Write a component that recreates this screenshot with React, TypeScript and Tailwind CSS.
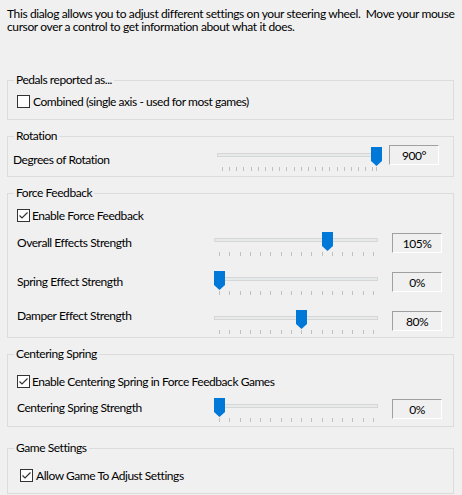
import React from 'react';

const FF_TICKS = Array.from({ length: 16 }, (_, i) => i / 15);
const ROT_TICKS = [...Array.from({ length: 22 }, (_, i) => i / 21.5), 1];

// Trackbar: track, tick row and the blue thumb
const Slider = ({ pos, ticks }: { pos: number; ticks: number[] }) => {
  const span = 154;
  return (
    <div className="relative h-[24px] w-[164px] shrink-0 pt-[6px]">
      <div className="h-[4px] border border-[#d6d6d6] bg-[#e7eaea]" />
      <svg className="mt-[10px] block" width={164} height={4}>
        {ticks.map((t, i) => (
          <rect key={i} x={5 + Math.round(t * span)} y={0} width={1} height={4} fill="#c0c0c0" />
        ))}
      </svg>
      <svg className="absolute top-0" style={{ left: Math.round(pos * span) }} width={11} height={19}>
        <path d="M0 0H11V14L5.5 19L0 14Z" fill="#0078d7" />
      </svg>
    </div>
  );
};

const ValueBox = ({ value, className }: { value: string; className: string }) => (
  <div
    className={
      'flex h-[20px] w-[50px] shrink-0 items-center justify-center border border-t-[#a0a0a0] border-l-[#a0a0a0] border-b-white border-r-white leading-[15px] ' +
      className
    }
  >
    {value}
  </div>
);

const Checkbox = ({ checked }: { checked: boolean }) => (
  <div className="h-[13px] w-[13px] shrink-0 border border-[#333333] bg-white">
    {checked && (
      <svg width={11} height={11} className="block">
        <path d="M1.5 5.5L4 8L9.5 2.5" stroke="#333333" strokeWidth={1.2} fill="none" />
      </svg>
    )}
  </div>
);

const Group = ({ title, className, children }: { title: string; className: string; children: React.ReactNode }) => (
  <fieldset className={'border border-[#dcdcdc] ' + className}>
    <legend className="ml-[6px] px-[2px] leading-[14px]">{title}</legend>
    {children}
  </fieldset>
);

const CheckRow = ({ label, checked, className, textClass }: { label: string; checked: boolean; className: string; textClass: string }) => (
  <div className={'flex h-[13px] items-center ' + className}>
    <Checkbox checked={checked} />
    <span className={'whitespace-nowrap leading-[15px] ' + textClass}>{label}</span>
  </div>
);

const FFRow = ({ label, labelClass, value, pos, className }: { label: string; labelClass: string; value: string; pos: number; className: string }) => (
  <div className={'flex pl-[9px] ' + className}>
    <div className={'w-[197px] shrink-0 leading-[15px] ' + labelClass}>{label}</div>
    <Slider pos={pos} ticks={FF_TICKS} />
    <ValueBox value={value} className="ml-[14px] mt-[1px]" />
  </div>
);

export default function App() {
  return (
    <div className="min-h-[495px] bg-[#f0f0f0] pl-[7px] pr-[8px] pt-[7px] font-['Lato',sans-serif] text-[12px] leading-[15px] tracking-[-0.45px] text-black">
      <p className="whitespace-nowrap leading-[13px] tracking-[-0.38px]">
        This dialog allows you to adjust different settings on your steering wheel.&nbsp; Move your mouse
        <br />
        cursor over a control to get information about what it does.
      </p>

      <Group title="Pedals reported as..." className="mt-[40px] pb-[11px]">
        <CheckRow label="Combined (single axis - used for most games)" checked={false} className="mt-[8px] pl-[9px]" textClass="ml-[3px]" />
      </Group>

      <Group title="Rotation" className="mt-[9px] pb-[5px]">
        <div className="mt-[2px] flex pl-[5px]">
          <div className="mt-[7px] w-[204px] shrink-0">Degrees of Rotation</div>
          <div className="mt-[2px]">
            <Slider pos={1} ticks={ROT_TICKS} />
          </div>
          <ValueBox value="900°" className="ml-[8px]" />
        </div>
      </Group>

      <Group title="Force Feedback" className="mt-[9px] pb-[3px]">
        <CheckRow label="Enable Force Feedback" checked className="mt-[9px] pl-[9px]" textClass="ml-[2px]" />
        <FFRow label="Overall Effects Strength" labelClass="mt-[3px]" value="105%" pos={105 / 150} className="mt-[10px] h-[39px]" />
        <FFRow label="Spring Effect Strength" labelClass="mt-[3px]" value="0%" pos={0} className="h-[39px]" />
        <FFRow label="Damper Effect Strength" labelClass="mt-[-2px]" value="80%" pos={80 / 150} className="h-[24px]" />
      </Group>

      <Group title="Centering Spring" className="mt-[9px] pb-[4px]">
        <CheckRow label="Enable Centering Spring in Force Feedback Games" checked className="mt-[14px] pl-[9px]" textClass="ml-[2px]" />
        <FFRow label="Centering Spring Strength" labelClass="mt-[2px]" value="0%" pos={0} className="mt-[10px] h-[24px]" />
      </Group>

      <Group title="Game Settings" className="mt-[14px] pb-[11px]">
        <CheckRow label="Allow Game To Adjust Settings" checked className="mt-[14px] pl-[12px]" textClass="ml-[3px]" />
      </Group>
    </div>
  );
}
